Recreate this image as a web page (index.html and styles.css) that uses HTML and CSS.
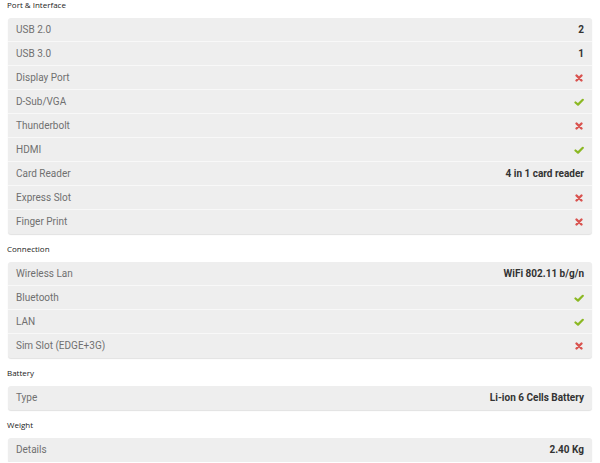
FILE: index.html
```html
<!DOCTYPE html>
<html>
<head>
<meta charset="utf-8">
<link rel="stylesheet" href="styles.css">
</head>
<body>
<div class="page">
  <section class="section">
    <h3 class="heading">Port &amp; Interface</h3>
    <div class="box">
      <div class="row"><span class="label">USB 2.0</span><span class="value">2</span></div>
      <div class="row"><span class="label">USB 3.0</span><span class="value">1</span></div>
      <div class="row"><span class="label">Display Port</span><span class="value"><svg class="ico no" viewBox="0 0 10 10"><path d="M2.5 2.5L7.5 7.5M7.5 2.5L2.5 7.5"/></svg></span></div>
      <div class="row"><span class="label">D-Sub/VGA</span><span class="value"><svg class="ico yes" viewBox="0 0 10 10"><path d="M1.5 5.5L4 7.6L8.8 2.8"/></svg></span></div>
      <div class="row"><span class="label">Thunderbolt</span><span class="value"><svg class="ico no" viewBox="0 0 10 10"><path d="M2.5 2.5L7.5 7.5M7.5 2.5L2.5 7.5"/></svg></span></div>
      <div class="row"><span class="label">HDMI</span><span class="value"><svg class="ico yes" viewBox="0 0 10 10"><path d="M1.5 5.5L4 7.6L8.8 2.8"/></svg></span></div>
      <div class="row"><span class="label">Card Reader</span><span class="value">4 in 1 card reader</span></div>
      <div class="row"><span class="label">Express Slot</span><span class="value"><svg class="ico no" viewBox="0 0 10 10"><path d="M2.5 2.5L7.5 7.5M7.5 2.5L2.5 7.5"/></svg></span></div>
      <div class="row"><span class="label">Finger Print</span><span class="value"><svg class="ico no" viewBox="0 0 10 10"><path d="M2.5 2.5L7.5 7.5M7.5 2.5L2.5 7.5"/></svg></span></div>
    </div>
  </section>
  <section class="section">
    <h3 class="heading">Connection</h3>
    <div class="box">
      <div class="row"><span class="label">Wireless Lan</span><span class="value">WiFi 802.11 b/g/n</span></div>
      <div class="row"><span class="label">Bluetooth</span><span class="value"><svg class="ico yes" viewBox="0 0 10 10"><path d="M1.5 5.5L4 7.6L8.8 2.8"/></svg></span></div>
      <div class="row"><span class="label">LAN</span><span class="value"><svg class="ico yes" viewBox="0 0 10 10"><path d="M1.5 5.5L4 7.6L8.8 2.8"/></svg></span></div>
      <div class="row"><span class="label">Sim Slot (EDGE+3G)</span><span class="value"><svg class="ico no" viewBox="0 0 10 10"><path d="M2.5 2.5L7.5 7.5M7.5 2.5L2.5 7.5"/></svg></span></div>
    </div>
  </section>
  <section class="section">
    <h3 class="heading">Battery</h3>
    <div class="box">
      <div class="row"><span class="label">Type</span><span class="value">Li-ion 6 Cells Battery</span></div>
    </div>
  </section>
  <section class="section">
    <h3 class="heading">Weight</h3>
    <div class="box">
      <div class="row"><span class="label">Details</span><span class="value">2.40 Kg</span></div>
    </div>
  </section>
</div>
</body>
</html>
```

FILE: styles.css
```css
html, body {
  margin: 0;
  padding: 0;
  background: #fff;
}
.page {
  padding: 0 8px;
  font-family: Roboto, "Liberation Sans", sans-serif;
  display: flex;
  flex-direction: column;
  gap: 10px;
}
.section {
  display: flex;
  flex-direction: column;
}
.heading {
  margin: 0 0 8px -1px;
  font-family: "Open Sans", "Liberation Sans", sans-serif;
  font-size: 8px;
  line-height: 10px;
  font-weight: 400;
  color: #222;
}
.box {
  background: #eeeeee;
  border-radius: 3px;
  box-shadow: 0 1px 1px rgba(0,0,0,0.12);
}
.row {
  height: 23px;
  display: flex;
  align-items: center;
  justify-content: space-between;
  padding: 0 8px;
  border-bottom: 1px solid #f8f8f8;
}
.row:last-child {
  border-bottom: 1px solid transparent;
}
.label {
  font-size: 10px;
  color: #707070;
}
.value {
  font-size: 10px;
  font-weight: 700;
  color: #333;
  display: flex;
  align-items: center;
}
.ico {
  width: 10px;
  height: 10px;
  fill: none;
  stroke-linecap: round;
  stroke-linejoin: round;
}
.ico.no {
  stroke: #d9534f;
  stroke-width: 2.4;
}
.ico.yes {
  stroke: #8bb823;
  stroke-width: 2.2;
}
```
